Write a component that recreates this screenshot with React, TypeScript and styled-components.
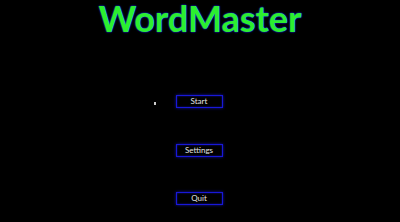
import React from "react";
import styled, { createGlobalStyle } from "styled-components";

const Global = createGlobalStyle`
  html, body { margin: 0; padding: 0; background: #000; }
  body { width: 400px; height: 222px; overflow: hidden; }
`;

const Screen = styled.div`
  position: relative;
  width: 400px;
  height: 222px;
  background: #000;
  display: flex;
  flex-direction: column;
  align-items: center;
  font-family: "Lato", "Noto Sans", sans-serif;
`;

const Title = styled.h1`
  margin: 0;
  font-family: "Lato", sans-serif;
  font-weight: 700;
  font-size: 36px;
  line-height: 36px;
  color: #2cee30;
  text-shadow: 0 0 1px #1a2cff, 0 0 2px #1a2cff;
`;

const Menu = styled.div`
  display: flex;
  flex-direction: column;
  align-items: center;
  gap: 35.5px;
  margin-top: 59px;
  margin-left: -2px;
`;

const MenuButton = styled.button`
  box-sizing: border-box;
  width: 47px;
  height: 13px;
  padding: 0;
  background: #000;
  border: 1px solid #1818d8;
  box-shadow: 0 0 3px #1212a0, inset 0 0 2px #1212a0;
  color: #e6e6e6;
  font-family: "Lato", sans-serif;
  font-size: 8px;
  line-height: 11px;
  text-align: center;
`;

const Cursor = styled.div`
  position: absolute;
  left: 154px;
  top: 102px;
  width: 2px;
  height: 3px;
  background: #ccc;
`;

export default function App() {
  return (
    <>
      <Global />
      <Screen>
        <Title>WordMaster</Title>
        <Menu>
          <MenuButton>Start</MenuButton>
          <MenuButton>Settings</MenuButton>
          <MenuButton>Quit</MenuButton>
        </Menu>
        <Cursor />
      </Screen>
    </>
  );
}
